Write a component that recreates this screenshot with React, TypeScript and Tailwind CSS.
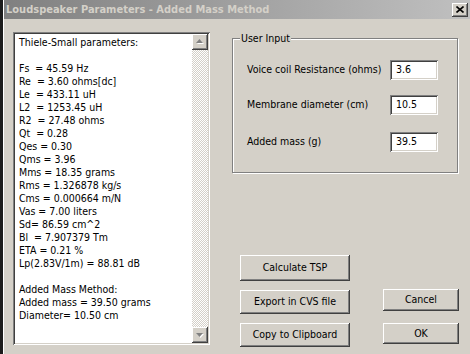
import React from 'react';

const sunken =
    'shadow-[inset_1px_1px_0_#808080,inset_-1px_-1px_0_#ffffff,inset_2px_2px_0_#404040,inset_-2px_-2px_0_#d4d0c8]';
const raised =
    'shadow-[inset_-1px_-1px_0_#404040,inset_1px_1px_0_#ffffff,inset_-2px_-2px_0_#808080,inset_2px_2px_0_#d4d0c8]';

const lines = [
    'Thiele-Small parameters:',
    '',
    'Fs  = 45.59 Hz',
    'Re  = 3.60 ohms[dc]',
    'Le  = 433.11 uH',
    'L2  = 1253.45 uH',
    'R2  = 27.48 ohms',
    'Qt  = 0.28',
    'Qes = 0.30',
    'Qms = 3.96',
    'Mms = 18.35 grams',
    'Rms = 1.326878 kg/s',
    'Cms = 0.000664 m/N',
    'Vas = 7.00 liters',
    'Sd= 86.59 cm^2',
    'Bl  = 7.907379 Tm',
    'ETA = 0.21 %',
    'Lp(2.83V/1m) = 88.81 dB',
    '',
    'Added Mass Method:',
    'Added mass = 39.50 grams',
    'Diameter= 10.50 cm',
];

const fields = [
    { label: 'Voice coil Resistance (ohms)', value: '3.6', mt: 'mt-0' },
    { label: 'Membrane diameter (cm)', value: '10.5', mt: 'mt-[15px]' },
    { label: 'Added mass (g)', value: '39.5', mt: 'mt-[17px]' },
];

const Arrow: React.FC<{ down?: boolean }> = ({ down }) => (
    <svg width="16" height="16" viewBox="0 0 16 16">
        {down ? (
            <>
                <polygon points="5,7 12,7 8.5,11" fill="#ffffff" />
                <polygon points="4,6 11,6 7.5,10" fill="#808080" />
            </>
        ) : (
            <>
                <polygon points="5,10 12,10 8.5,6" fill="#ffffff" />
                <polygon points="4,9 11,9 7.5,5" fill="#808080" />
            </>
        )}
    </svg>
);

const Btn: React.FC<{ label: string; h: string; mt?: string; w: string }> = ({ label, h, mt = '', w }) => (
    <div className={`${w} ${h} ${mt} ${raised} bg-[#d4d0c8] flex items-center justify-center text-[10.5px] text-black`}>
        {label}
    </div>
);

const App: React.FC = () => {
    return (
        <div className="w-[470px] h-[354px] flex bg-[#1c1c1c] overflow-hidden font-['DejaVu_Sans_Condensed','Liberation_Sans',sans-serif]">
            <div className="w-[3px] shrink-0" />
            <div className="flex-1 flex flex-col bg-[#d4d0c8] border-l border-white">
                {/* title bar */}
                <div className="h-[19px] shrink-0 flex items-center justify-between pl-[2px] pr-[2px] bg-[linear-gradient(to_right,#808080,#c0c0c0)]">
                    <span className="text-[11px] font-bold text-[#d4d0c8] leading-none">
                        Loudspeaker Parameters - Added Mass Method
                    </span>
                    <div className={`w-[16px] h-[14px] bg-[#d4d0c8] ${raised} flex items-center justify-center`}>
                        <svg width="8" height="7" viewBox="0 0 8 7">
                            <path d="M0.5 0.5 L7.5 6.5 M7.5 0.5 L0.5 6.5" stroke="#000" strokeWidth="1.6" />
                        </svg>
                    </div>
                </div>

                <div className="flex pt-[13px] pl-[9px]">
                    {/* results text box */}
                    <div className={`w-[197px] h-[313px] bg-white ${sunken} p-[2px] flex`}>
                        <div className="flex-1 pl-[4px] pt-[2px] text-[10.5px] leading-[13px] text-black whitespace-pre">
                            {lines.map((l, i) => (
                                <div key={i} className="h-[13px]">{l}</div>
                            ))}
                        </div>
                        <div className="w-[16px] flex flex-col">
                            <div className={`h-[16px] bg-[#d4d0c8] ${raised}`}>
                                <Arrow />
                            </div>
                            <div className="flex-1 bg-[repeating-conic-gradient(#d4d0c8_0_25%,#ffffff_0_50%)] bg-[length:2px_2px]" />
                            <div className={`h-[16px] bg-[#d4d0c8] ${raised}`}>
                                <Arrow down />
                            </div>
                        </div>
                    </div>

                    {/* right column */}
                    <div className="ml-[22px] mt-[6px] flex flex-col">
                        <div className="relative w-[226px] h-[135px] border border-[#808080] shadow-[1px_1px_0_#ffffff,inset_1px_1px_0_#ffffff] pt-[21px] pl-[14px]">
                            <span className="absolute -top-[8px] left-[7px] bg-[#d4d0c8] px-[1px] text-[10.5px] leading-[14px]">
                                User Input
                            </span>
                            {fields.map((f) => (
                                <div key={f.label} className={`flex items-center h-[20px] ${f.mt}`}>
                                    <span className="w-[143px] text-[10.5px] whitespace-nowrap">{f.label}</span>
                                    <div className={`w-[48px] h-[20px] bg-white ${sunken} flex items-center pl-[6px] text-[10.5px]`}>
                                        {f.value}
                                    </div>
                                </div>
                            ))}
                        </div>

                        <div className="flex mt-[82px] pl-[8px]">
                            <div className="flex flex-col">
                                <Btn label="Calculate TSP" w="w-[110px]" h="h-[26px]" />
                                <Btn label="Export in CVS file" w="w-[110px]" h="h-[24px]" mt="mt-[9px]" />
                                <Btn label="Copy to Clipboard" w="w-[110px]" h="h-[24px]" mt="mt-[9px]" />
                            </div>
                            <div className="flex flex-col ml-[33px] pt-[34px]">
                                <Btn label="Cancel" w="w-[76px]" h="h-[22px]" />
                                <Btn label="OK" w="w-[76px]" h="h-[21px]" mt="mt-[12px]" />
                            </div>
                        </div>
                    </div>
                </div>
            </div>
        </div>
    );
};

export default App;
